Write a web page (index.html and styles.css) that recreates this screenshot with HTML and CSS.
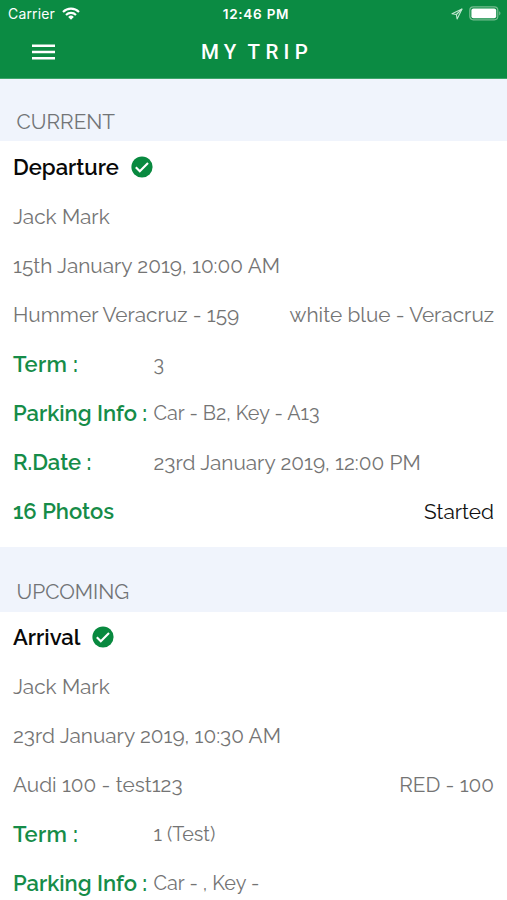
FILE: index.html
```html
<!DOCTYPE html>
<html lang="en">
<head>
<meta charset="utf-8">
<meta name="viewport" content="width=device-width, initial-scale=1">
<title>My Trip</title>
<link rel="stylesheet" href="styles.css">
</head>
<body>
<header class="app-header">
  <div class="status-bar">
    <div class="status-left">
      <span class="carrier">Carrier</span>
      <svg class="wifi" viewBox="0 0 18 13" fill="none" stroke="#fff" stroke-width="2.1"><path d="M1 4.9a11.4 11.4 0 0 1 16 0M4 7.9a7.1 7.1 0 0 1 10 0"/><path d="M6.2 9.9a4 4 0 0 1 5.6 0L9 12.7z" fill="#fff" stroke="none"/></svg>
    </div>
    <time class="clock">12:46 PM</time>
    <div class="status-right">
      <svg class="location" viewBox="0 0 12 12" fill="none" stroke="#c4e8d2" stroke-width="1.1" stroke-linejoin="round"><path d="M11 1 1 5.8l4.4.7.7 4.5z"/><path d="M5.4 6.5 11 1"/></svg>
      <svg class="battery" viewBox="0 0 32 15"><rect x=".8" y=".8" width="28" height="13" rx="3.5" fill="none" stroke="#75bd90" stroke-width="1.2"/><rect x="2.4" y="2.4" width="24.8" height="9.8" rx="2" fill="#fff"/><path d="M30.2 5.3c1.7.7 1.7 3.4 0 4.1z" fill="#75bd90"/></svg>
    </div>
  </div>
  <nav class="nav-bar">
    <svg class="menu" viewBox="0 0 23 16" fill="#fff"><path d="M0 .5h23v2.4H0zM0 6.8h23v2.4H0zM0 13.1h23v2.4H0z"/></svg>
    <h1 class="title">MY TRIP</h1>
  </nav>
</header>
<main>
  <section>
    <h2 class="section-title current">CURRENT</h2>
    <div class="trip trip-current">
      <div class="row heading"><span>Departure</span><svg class="check" viewBox="0 0 22 22"><circle cx="11" cy="11" r="10.6" fill="#08893f"/><path d="m4.8 11.2 4 4 8.2-8.3" fill="none" stroke="#fff" stroke-width="2.1"/></svg></div>
      <div class="row">Jack Mark</div>
      <div class="row">15th January 2019, 10:00 AM</div>
      <div class="row split"><span>Hummer Veracruz - 159</span><span>white blue - Veracruz</span></div>
      <div class="row detail"><span class="label term">Term :</span><span class="value">3</span></div>
      <div class="row detail"><span class="label">Parking Info :</span><span class="value">Car - B2, Key - A13</span></div>
      <div class="row detail"><span class="label">R.Date :</span><span>23rd January 2019, 12:00 PM</span></div>
      <div class="row split"><span class="label">16 Photos</span><span class="started">Started</span></div>
    </div>
  </section>
  <section>
    <h2 class="section-title upcoming">UPCOMING</h2>
    <div class="trip">
      <div class="row heading"><span>Arrival</span><svg class="check" viewBox="0 0 22 22"><circle cx="11" cy="11" r="10.6" fill="#08893f"/><path d="m4.8 11.2 4 4 8.2-8.3" fill="none" stroke="#fff" stroke-width="2.1"/></svg></div>
      <div class="row">Jack Mark</div>
      <div class="row">23rd January 2019, 10:30 AM</div>
      <div class="row split"><span>Audi 100 - test123</span><span>RED - 100</span></div>
      <div class="row detail"><span class="label term">Term :</span><span class="value">1 (Test)</span></div>
      <div class="row detail"><span class="label">Parking Info :</span><span class="value">Car - , Key -</span></div>
    </div>
  </section>
</main>
</body>
</html>
```
FILE: styles.css
```css
* { box-sizing: border-box; }
body { margin: 0; height: 900px; overflow: hidden; background: #fff; color: #747474; font: 20.8px/25px Raleway, Lato, sans-serif; }
.app-header { height: 79px; background: #0b8b43; color: #fff; border-bottom: 1px solid #3da56a; }
.status-bar { height: 27px; padding: 0 6px 0 8px; display: grid; grid-template-columns: 1fr auto 1fr; align-items: center; font: 14px/18px Inter, sans-serif; }
.status-left, .status-right { display: flex; align-items: center; }
.status-left { gap: 7px; }
.carrier { letter-spacing: .15px; }
.status-right { justify-content: flex-end; gap: 6px; }
.wifi { width: 18px; height: 13px; }
.location { width: 12px; height: 12px; }
.battery { width: 32px; height: 15px; }
.clock { font-weight: 600; font-size: 13.5px; letter-spacing: .75px; padding-left: 3px; }
.nav-bar { height: 50px; display: grid; grid-template-columns: 1fr auto 1fr; align-items: center; padding-left: 32px; padding-right: 25px; }
.menu { width: 23px; height: 16px; }
.title { margin: 0; font: 500 20.5px/24px Roboto, sans-serif; letter-spacing: 5.3px; word-spacing: -4px; }
.section-title { margin: 0; padding-left: 16.5px; font-size: 20.8px; font-weight: 400; line-height: 26px; background: #f0f4fc; color: #727477; }
.current { height: 62px; padding-top: 30px; }
.upcoming { height: 65px; padding-top: 32px; }
.trip { padding: .9px 13px 0; }
.trip-current { height: 406px; padding-top: 1.8px; }
.row { height: 49.17px; display: flex; align-items: center; white-space: nowrap; }
.heading { gap: 12px; color: #080808; font-weight: 600; font-size: 22px; }
.check { width: 22px; height: 22px; }
.split { justify-content: space-between; }
.detail { display: grid; grid-template-columns: 140.5px 1fr; }
.label { color: #168c48; font-weight: 600; font-size: 22px; }
.term { letter-spacing: .3px; }
.value { font-size: 19.8px; }
.started { color: #111; }
```
